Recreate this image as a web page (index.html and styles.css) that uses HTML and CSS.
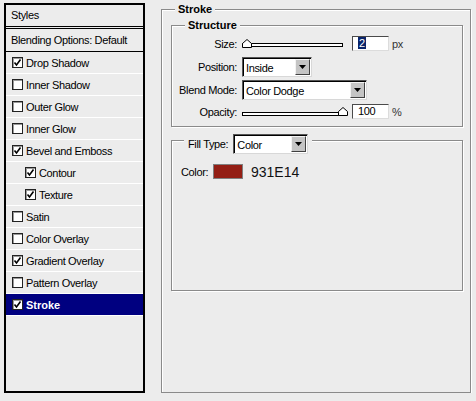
FILE: index.html
```html
<!DOCTYPE html>
<html lang="en">
<head>
    <meta charset="UTF-8">
    <title>Layer Style - Stroke</title>
    <link rel="stylesheet" href="styles.css">
</head>
<body>

    <div class="dialog">
        <!-- effects list on the left -->
        <div class="styles-list">
            <div class="list-head">Styles</div>
            <div class="list-blend">Blending Options: Default</div>
            <div class="item"><span class="check on"><svg viewBox="0 0 9 9"><polyline points="1.5,4.5 3.5,7 7.5,1.5"/></svg></span>Drop Shadow</div>
            <div class="item"><span class="check"></span>Inner Shadow</div>
            <div class="item"><span class="check"></span>Outer Glow</div>
            <div class="item"><span class="check"></span>Inner Glow</div>
            <div class="item"><span class="check on"><svg viewBox="0 0 9 9"><polyline points="1.5,4.5 3.5,7 7.5,1.5"/></svg></span>Bevel and Emboss</div>
            <div class="item sub"><span class="check on"><svg viewBox="0 0 9 9"><polyline points="1.5,4.5 3.5,7 7.5,1.5"/></svg></span>Contour</div>
            <div class="item sub"><span class="check on"><svg viewBox="0 0 9 9"><polyline points="1.5,4.5 3.5,7 7.5,1.5"/></svg></span>Texture</div>
            <div class="item"><span class="check"></span>Satin</div>
            <div class="item"><span class="check"></span>Color Overlay</div>
            <div class="item"><span class="check on"><svg viewBox="0 0 9 9"><polyline points="1.5,4.5 3.5,7 7.5,1.5"/></svg></span>Gradient Overlay</div>
            <div class="item"><span class="check"></span>Pattern Overlay</div>
            <div class="item active"><span class="check on"><svg viewBox="0 0 9 9"><polyline points="1.5,4.5 3.5,7 7.5,1.5"/></svg></span>Stroke</div>
        </div>

        <!-- stroke settings -->
        <div class="panel group">
            <div class="group-title">Stroke</div>

            <div class="structure group">
                <div class="group-title">Structure</div>

                <div class="field size">
                    <label>Size:</label>
                    <div class="slider">
                        <span class="track"></span>
                        <svg class="thumb" style="left:0" viewBox="0 0 10 9"><polygon points="0.5,8.5 0.5,4.5 5,0.5 9.5,4.5 9.5,8.5"/></svg>
                    </div>
                    <span class="num"><span class="sel">2</span></span>
                    <span class="unit">px</span>
                </div>

                <div class="field position">
                    <label>Position:</label>
                    <div class="select w-pos">
                        <span class="value">Inside</span>
                        <span class="arrow"><svg viewBox="0 0 7 4"><polygon points="0,0 7,0 3.5,4"/></svg></span>
                    </div>
                </div>

                <div class="field blend">
                    <label>Blend Mode:</label>
                    <div class="select w-blend">
                        <span class="value">Color Dodge</span>
                        <span class="arrow"><svg viewBox="0 0 7 4"><polygon points="0,0 7,0 3.5,4"/></svg></span>
                    </div>
                </div>

                <div class="field opacity">
                    <label>Opacity:</label>
                    <div class="slider">
                        <span class="track"></span>
                        <svg class="thumb" style="left:96px" viewBox="0 0 10 9"><polygon points="0.5,8.5 0.5,4.5 5,0.5 9.5,4.5 9.5,8.5"/></svg>
                    </div>
                    <span class="num">100</span>
                    <span class="unit">%</span>
                </div>
            </div>

            <div class="fill group">
                <div class="fill-title">
                    <span class="fill-label">Fill Type:</span>
                    <div class="select w-fill">
                        <span class="value">Color</span>
                        <span class="arrow"><svg viewBox="0 0 7 4"><polygon points="0,0 7,0 3.5,4"/></svg></span>
                    </div>
                </div>

                <div class="color-row">
                    <span class="color-label">Color:</span>
                    <span class="swatch"></span>
                    <span class="hex">931E14</span>
                </div>
            </div>
        </div>
    </div>

</body>
</html>
```

FILE: styles.css
```css
body {
    margin: 0;
    background: #ececec;
    font-family: "Liberation Sans", Arial, sans-serif;
    font-size: 11px;
    letter-spacing: -0.35px;
    color: #000;
}

.dialog {
    display: flex;
    align-items: flex-start;
    gap: 16px;
    padding: 3px 0 0 4px;
}

/* left list */
.styles-list {
    width: 141px;
    height: 390px;
    box-sizing: border-box;
    border: 2px solid #000;
}

.list-head {
    height: 21px;
    line-height: 21px;
    padding-left: 5px;
    border-bottom: 3px double #000;
}

.list-blend {
    height: 22px;
    line-height: 22px;
    padding-left: 5px;
    border-bottom: 1px solid #000;
}

.item {
    height: 21px;
    display: flex;
    align-items: center;
    padding-left: 6px;
    border-bottom: 1px solid #fff;
}

.item.sub {
    padding-left: 19px;
}

.item.active {
    background: #000080;
    color: #fff;
    font-weight: bold;
    letter-spacing: 0;
}

.check {
    width: 11px;
    height: 11px;
    box-sizing: border-box;
    margin-right: 3px;
    border: 1px solid #222;
    background: #fff;
    box-shadow: inset 1px 1px 0 #9a9a9a;
    display: flex;
    align-items: center;
    justify-content: center;
}

.check svg {
    width: 9px;
    height: 9px;
}

.check polyline {
    fill: none;
    stroke: #000;
    stroke-width: 1.6;
}

/* etched group boxes */
.group {
    border: 1px solid #8a8a8a;
    box-shadow: inset 1px 1px 0 #fff, 1px 1px 0 #fff;
}

.group-title {
    width: fit-content;
    margin: -7px 0 0 13px;
    padding: 0 3px;
    line-height: 13px;
    background: #ececec;
    font-weight: bold;
    letter-spacing: 0;
}

.panel {
    margin-top: 6px;
    width: 310px;
    height: 384px;
    box-sizing: border-box;
}

.structure {
    margin: 9px 7px 0 9px;
    padding-bottom: 7px;
}

.field {
    display: flex;
    align-items: center;
}

.field label {
    width: 65px;
    margin-right: 5px;
    text-align: right;
}

.size { height: 15px; margin-top: 4px; }
.position { height: 20px; margin-top: 6px; }
.blend { height: 20px; margin-top: 3px; }
.opacity { height: 15px; margin-top: 4px; }

/* sliders */
.slider {
    position: relative;
    width: 101px;
    height: 15px;
}

.track {
    display: block;
    margin-top: 7px;
    height: 4px;
    box-sizing: border-box;
    border: 1px solid #000;
    background: #fff;
}

.opacity .track {
    margin-top: 8px;
}

.thumb {
    position: absolute;
    top: 3px;
    width: 10px;
    height: 9px;
}

.thumb polygon {
    fill: #fff;
    stroke: #000;
    stroke-width: 1;
}

.num {
    width: 37px;
    height: 15px;
    box-sizing: border-box;
    margin-left: 9px;
    padding-left: 5px;
    line-height: 13px;
    background: #fff;
    border: 1px solid;
    border-color: #4a4a4a #dcdcdc #dcdcdc #4a4a4a;
}

.sel {
    background: #0a246a;
    color: #fff;
    padding: 0 1px;
}

.unit {
    margin-left: 3px;
    color: #333;
}

/* dropdowns */
.select {
    display: flex;
    height: 20px;
    box-sizing: border-box;
    background: #fff;
    border: 1px solid;
    border-color: #555 #d8d8d8 #d8d8d8 #555;
    box-shadow: inset 1px 1px 0 #000;
}

.w-pos { width: 70px; }
.w-blend { width: 125px; }
.w-fill { width: 75px; }

.select .value {
    flex: 1;
    padding: 1px 0 0 3px;
    line-height: 18px;
}

.select .arrow {
    width: 15px;
    margin: 1px;
    box-sizing: border-box;
    background: #c4c4c4;
    border: 1px solid;
    border-color: #f2f2f2 #404040 #404040 #f2f2f2;
    display: flex;
    align-items: center;
    justify-content: center;
}

.arrow svg {
    width: 7px;
    height: 4px;
}

/* fill type box */
.fill {
    margin: 13px 7px 0 9px;
    height: 151px;
    box-sizing: border-box;
}

.fill-title {
    width: fit-content;
    display: flex;
    align-items: center;
    margin: -7px 0 0 12px;
    padding: 0 4px;
    background: #ececec;
}

.fill-label {
    margin-right: 5px;
}

.color-row {
    display: flex;
    align-items: center;
    height: 15px;
    margin: 10px 0 0 9px;
}

.color-label {
    width: 32px;
}

.swatch {
    width: 30px;
    height: 15px;
    box-sizing: border-box;
    border: 1px solid #7f7f7f;
    background: #931e14;
}

.hex {
    margin-left: 8px;
    font-size: 14px;
    letter-spacing: 0;
    color: #111;
}
```
